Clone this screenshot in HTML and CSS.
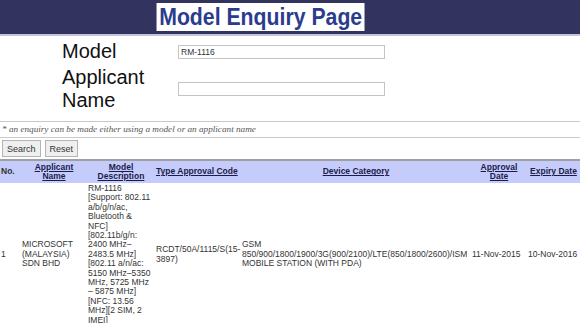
FILE: index.html
```html
<!DOCTYPE html>
<html lang="en">
<head>
<meta charset="utf-8">
<title>Model Enquiry Page</title>
<link rel="stylesheet" href="styles.css">
</head>
<body>
<div class="banner"><span class="title">Model Enquiry Page</span></div>

<div class="enquiry">
	<label class="label" for="model">Model</label>
	<input class="field" type="text" id="model" value="RM-1116">
	<label class="label" for="applicant">Applicant Name</label>
	<input class="field" type="text" id="applicant" value="">
</div>

<div class="note">* an enquiry can be made either using a model or an applicant name</div>

<div class="actions">
	<button class="btn" type="button">Search</button>
	<button class="btn" type="button">Reset</button>
</div>

<table class="results">
	<colgroup>
		<col class="c-no">
		<col class="c-app">
		<col class="c-model">
		<col class="c-code">
		<col class="c-cat">
		<col class="c-appr">
		<col class="c-exp">
	</colgroup>
	<thead>
		<tr>
			<th class="left">No.</th>
			<th><a href="#">Applicant Name</a></th>
			<th><a href="#">Model Description</a></th>
			<th class="left"><a href="#">Type Approval Code</a></th>
			<th><a href="#">Device Category</a></th>
			<th><a href="#">Approval Date</a></th>
			<th><a href="#">Expiry Date</a></th>
		</tr>
	</thead>
	<tbody>
		<tr>
			<td>1</td>
			<td>MICROSOFT (MALAYSIA) SDN BHD</td>
			<td>RM-1116<br>[Support: 802.11 a/b/g/n/ac, Bluetooth &amp; NFC]<br>[802.11b/g/n: 2400 MHz&ndash;2483.5 MHz]<br>[802.11 a/n/ac: 5150 MHz&ndash;5350 MHz, 5725 MHz &ndash; 5875 MHz]<br>[NFC: 13.56 MHz][2 SIM, 2 IMEI]</td>
			<td>RCDT/50A/1115/S(15-3897)</td>
			<td>GSM 850/900/1800/1900/3G(900/2100)/LTE(850/1800/2600)/ISM MOBILE STATION (WITH PDA)</td>
			<td>11-Nov-2015</td>
			<td>10-Nov-2016</td>
		</tr>
	</tbody>
</table>
</body>
</html>
```

FILE: styles.css
```css
body {
	margin: 0px;
	font-family: "Liberation Sans", Arial, sans-serif;
	color: #333;
	background: #fff;
}

.banner {
	height: 34px;
	background: #33335f;
	border-bottom: 2px solid #c3c6d8;
	text-align: center;
	padding-right: 58px;
}

.title {
	display: inline-block;
	margin-top: 3px;
	padding: 0px 3px;
	background: #fff;
	color: #2a3c8e;
	font-size: 24px;
	font-weight: bold;
	line-height: 28px;
	transform: scaleX(0.885);
}

.enquiry {
	display: grid;
	grid-template-columns: 116px 207px;
	grid-template-rows: 23px 46px;
	row-gap: 3px;
	align-items: center;
	padding: 4px 0px 9px 62px;
}

.label {
	font-size: 20px;
	line-height: 23px;
	color: #111;
	width: 90px;
}

.field {
	box-sizing: border-box;
	width: 207px;
	height: 14px;
	margin: 0px;
	padding: 0px 2px;
	border: 1px solid #c4c4c4;
	font-family: "Liberation Sans", Arial, sans-serif;
	font-size: 8.5px;
	color: #333;
}

.note {
	border-top: 1px solid #c8c8c8;
	border-bottom: 1px solid #c8c8c8;
	padding: 3px 2px;
	font-family: "Liberation Serif", "Times New Roman", serif;
	font-style: italic;
	font-size: 9.2px;
	line-height: 9px;
	color: #555;
}

.actions {
	padding: 2px;
	border-bottom: 2px solid #a0a0a0;
	display: flex;
	gap: 4px;
}

.btn {
	height: 17px;
	padding: 0px 4px;
	background: #efefef;
	border: 1px solid #b4b4b4;
	font-family: "Liberation Sans", Arial, sans-serif;
	font-size: 9px;
	color: #333;
}

.results {
	width: 100%;
	border-collapse: collapse;
	table-layout: fixed;
	font-size: 8.5px;
	line-height: 9.4px;
}

.c-no { width: 21px; }
.c-app { width: 66px; }
.c-model { width: 68px; }
.c-code { width: 86px; }
.c-cat { width: 230px; }
.c-appr { width: 56px; }
.c-exp { width: 53px; }

.results th {
	background: #c5ccfb;
	padding: 1px 1px;
	font-weight: bold;
	line-height: 9.5px;
	height: 20px;
	text-align: center;
}

.results th.left {
	text-align: left;
}

.results th a {
	color: #1c1c4c;
}

.results td {
	padding: 1px 1px;
	vertical-align: middle;
}
```
